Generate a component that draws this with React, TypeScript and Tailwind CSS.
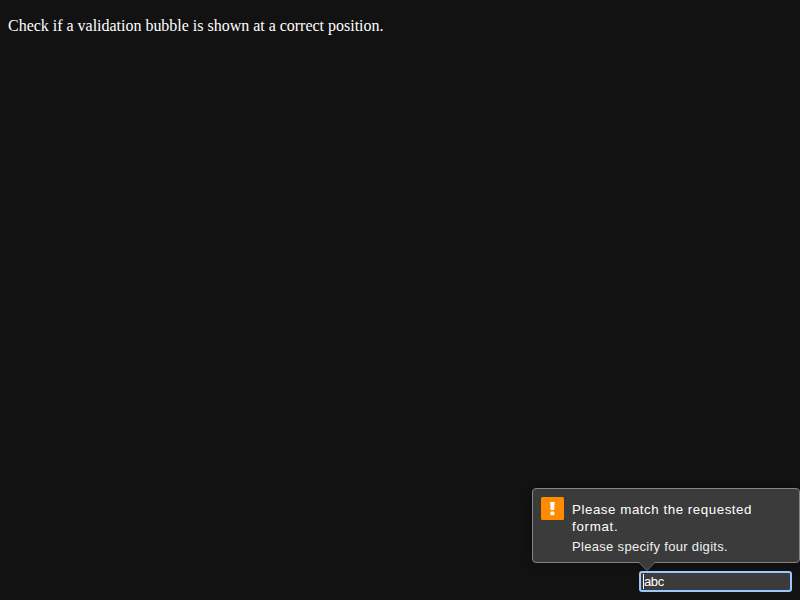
import React from "react";

function WarningIcon() {
  return (
    <svg className="mt-2 h-[23px] w-[23px] shrink-0" viewBox="0 0 23 23">
      <rect width="23" height="23" rx="1.5" fill="#ff8c00" />
      <path d="M9.2 5H13.6L13.2 13H9.6Z" fill="#fff" />
      <rect x="9.4" y="14.4" width="4" height="3.8" rx="1.2" fill="#fff" />
    </svg>
  );
}

function ValidationBubble() {
  return (
    <div className="relative flex h-[75px] w-[268px] rounded-[4px] border border-[#848484] bg-[#3b3b3b] pl-2 shadow-[0_0_8px_rgba(0,0,0,0.4)]">
      <WarningIcon />
      <div className="ml-2 pt-3 font-['Liberation_Sans',Arial,sans-serif] text-white">
        <p className="text-[13.333px] leading-[17px] whitespace-nowrap">
          <span className="block w-[180px] tracking-[0.54px]">Please match the requested</span>
          <span className="block tracking-[0.7px]">format.</span>
        </p>
        <p className="mt-[3px] text-[13px] leading-[17px] tracking-[0.32px] whitespace-nowrap text-[#f0f0f0]">
          Please specify four digits.
        </p>
      </div>
      <svg className="absolute top-[73px] left-[106px] h-[9px] w-[16px]" viewBox="0 0 16 9">
        <path d="M0 0H16L8 8.5Z" fill="#3b3b3b" />
        <path d="M0 .5L8 8.5L16 .5" fill="none" stroke="#6c6c6c" />
      </svg>
    </div>
  );
}

export default function App() {
  return (
    <main className="flex h-[600px] w-[800px] flex-col justify-between overflow-hidden bg-[#121212]">
      <p className="pt-[17px] pl-2 font-['Liberation_Serif','Times_New_Roman',serif] text-[16px] leading-[18px] tracking-[-0.015px] whitespace-nowrap text-white">
        Check if a validation bubble is shown at a correct position.
      </p>
      <div className="flex flex-col items-end pb-2">
        <ValidationBubble />
        <div className="mt-2 mr-2 flex h-[21px] w-[153px] items-center rounded-[3px] border-2 border-[#99c8ff] bg-[#3b3b3b] pl-[2px] font-['Liberation_Sans',Arial,sans-serif] text-[13px] leading-[15px] text-white">
          <span className="h-[15px] w-px bg-white" />
          <span className="tracking-[-0.4px]">abc</span>
        </div>
      </div>
    </main>
  );
}
